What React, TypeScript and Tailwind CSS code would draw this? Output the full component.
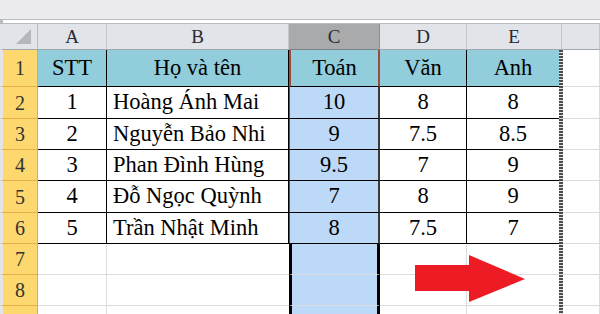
/**
 * Sheet — score table with column C selected and a copy marquee on A1:E
 */
const COLS = ["A", "B", "C", "D", "E", ""];

const ROWS: string[][] = [
  ["STT", "Họ và tên", "Toán", "Văn", "Anh"],
  ["1", "Hoàng Ánh Mai", "10", "8", "8"],
  ["2", "Nguyễn Bảo Nhi", "9", "7.5", "8.5"],
  ["3", "Phan Đình Hùng", "9.5", "7", "9"],
  ["4", "Đỗ Ngọc Quỳnh", "7", "8", "9"],
  ["5", "Trần Nhật Minh", "8", "7.5", "7"],
  ["", "", "", "", ""],
  ["", "", "", "", ""],
  ["", "", "", "", ""],
];

function cellClass(r: number, c: number) {
  const inTable = r <= 6 && c <= 4;
  const parts = ["flex items-center text-[22.5px] text-black leading-none"];

  // fill
  if (r === 1 && c <= 4) parts.push("bg-[#92cddc]");
  else if (c === 2) parts.push("bg-[#bcd9f7]");
  else parts.push("bg-white");

  // names sit left, everything else centred
  parts.push(c === 1 && r > 1 ? "justify-start pl-[6px]" : "justify-center");

  // bottom edge
  parts.push(inTable ? "border-b border-b-black" : "border-b border-b-[#dadcdd]");

  // right edge
  if (c === 4) parts.push("border-r-[3px] border-r-white");
  else if (c === 2 && r === 1) parts.push("border-x-2 border-x-[#9d4a3e]");
  else if (c === 2 && r <= 6) parts.push("border-l border-l-[#555] border-r-2 border-r-[#3a3a3a]");
  else if (c === 2) parts.push("border-x-[3px] border-x-black");
  else if (c === 1 && r > 6) parts.push("");
  else if (inTable) parts.push("border-r border-r-black");
  else parts.push("border-r border-r-[#dadcdd]");

  return parts.join(" ");
}

function RowHeader({ n }: { n: number }) {
  return (
    <div className="flex items-center justify-center bg-[#fcd86f] border-b border-b-[#e2b04e] border-r border-r-[#e2a94a] border-l-[3px] border-l-[#e4e4e6] text-[20px] text-[#333] leading-none">
      {n < 9 ? n : ""}
    </div>
  );
}

export default function App() {
  return (
    <div className="w-[600px] h-[314px] overflow-hidden bg-white font-[family-name:'Liberation_Serif','Times_New_Roman',serif]">
      {/* ribbon edge */}
      <div className="h-[19px] bg-[#ececef]" />
      <div className="h-[5px] bg-white border-y border-y-[#b8bcc2] border-l-[3px] border-l-[#b8bcc2]" />

      <div className="relative">
        <div className="grid grid-cols-[38px_69px_182px_91px_87px_95px_1fr] grid-rows-[26px_37px_32px_31px_31px_32px_31px_31px_31px_31px]">
          {/* corner */}
          <div className="relative bg-[#e1e4e8] border-r border-r-[#b9bdc2] border-b border-b-[#a2a7ad] border-l-[3px] border-l-[#e4e4e6]">
            <svg className="absolute right-[6px] bottom-[5px]" width="15" height="15" viewBox="0 0 15 15">
              <polygon points="15,0 15,15 0,15" fill="#b4b8bd" />
            </svg>
          </div>
          {COLS.map((letter, i) => (
            <div
              key={i}
              className={
                i === 2
                  ? "flex items-center justify-center bg-[#a9aaac] border-r border-r-[#8e9094] border-b border-b-[#7e8085] text-[19px] text-[#2a2a33] leading-none"
                  : "flex items-center justify-center bg-[#e1e4e8] border-r border-r-[#c3c7cc] border-b border-b-[#a2a7ad] text-[19px] text-[#2a2a33] leading-none"
              }
            >
              {letter}
            </div>
          ))}

          {ROWS.map((row, ri) => {
            const r = ri + 1;
            return [
              <RowHeader key={`h${r}`} n={r} />,
              ...row.map((val, c) => (
                <div key={`${r}-${c}`} className={cellClass(r, c)}>
                  {val}
                </div>
              )),
              <div key={`${r}-f`} className="bg-white border-b border-b-[#dadcdd] border-r border-r-[#dadcdd]" />,
            ];
          })}
        </div>

        {/* copy marquee along the right edge of column E */}
        <div className="absolute left-[559px] top-[26px] bottom-0 w-[4px] bg-[repeating-linear-gradient(to_bottom,#4d4d4d_0_2px,#e6e6e6_2px_3px)]" />

        {/* red arrow drawn over rows 7–8 */}
        <svg className="absolute left-[415px] top-[231px]" width="110" height="48" viewBox="0 0 110 48">
          <polygon points="0,10 54,10 54,0 110,24 54,47 54,36 0,36" fill="#ed1c24" />
        </svg>
      </div>
    </div>
  );
}
